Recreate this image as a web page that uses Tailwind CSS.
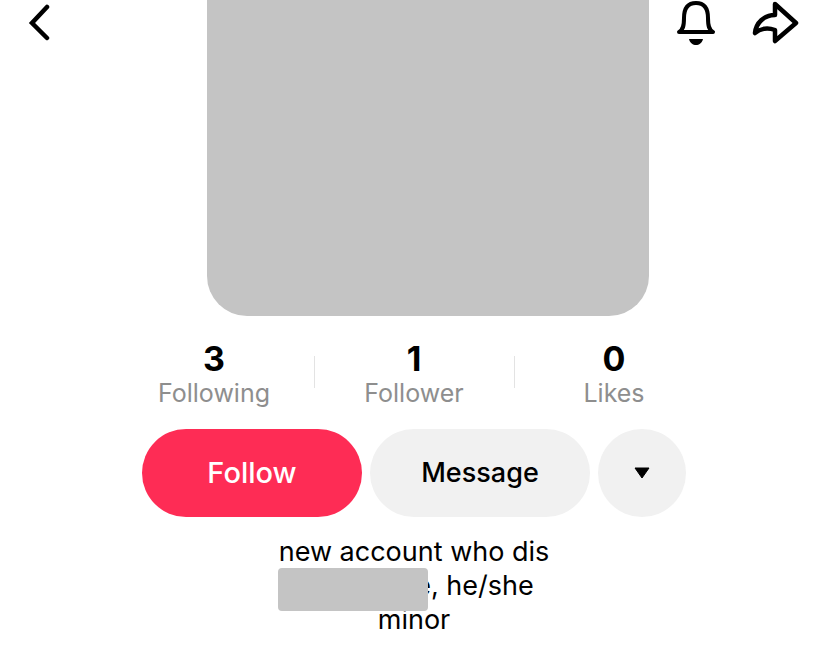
<!DOCTYPE html>
<html lang="en">
<head>
<meta charset="UTF-8" />
<title>Profile</title>
<script src="https://cdn.jsdelivr.net/npm/@tailwindcss/browser@4"></script>
</head>
<body class="bg-white text-black font-['Inter',sans-serif]">
<div class="relative w-[828px] h-[663px] overflow-hidden flex flex-col items-center">
  <!-- top icons -->
  <svg class="absolute left-[26px] top-[4px]" width="28" height="40" viewBox="0 0 28 40" fill="none" stroke="#000" stroke-width="4.5" stroke-linecap="round" stroke-linejoin="miter"><path d="M21 3 L6 19 L21 34"/></svg>
  <svg class="absolute left-[674px] top-0" width="44" height="48" viewBox="0 0 44 48" fill="none" stroke="#000" stroke-width="4" stroke-linecap="round" stroke-linejoin="round"><path d="M5 32 C9 30 10 26 10 18 C10 8 14 3 22 3 C30 3 34 8 34 18 C34 26 35 30 39 32 Z"/><path d="M15 39 H29 C28 43 25 45 22 45 C19 45 16 43 15 39 Z" fill="#000" stroke="none"/></svg>
  <svg class="absolute left-[751px] top-0" width="50" height="46" viewBox="0 0 50 46" fill="none" stroke="#000" stroke-width="4.5" stroke-linejoin="round"><path d="M24 4 L45 23 L24 41 V30 C16 27 9 29 4 33 C5 23 13 15 24 15 Z"/></svg>

  <!-- avatar -->
  <div class="self-start ml-[207px] w-[442px] h-[316px] bg-[#c4c4c4] rounded-b-[40px] shrink-0"></div>

  <!-- stats -->
  <div class="flex mt-[24px] w-[600px]">
    <div class="w-[200px] flex flex-col items-center">
      <span class="text-[34px] leading-[38px] font-bold">3</span>
      <span class="text-[25px] leading-[30px] text-[#8e8e8e]">Following</span>
    </div>
    <div class="w-[200px] flex flex-col items-center">
      <span class="text-[34px] leading-[38px] font-bold">1</span>
      <span class="text-[25px] leading-[30px] text-[#8e8e8e]">Follower</span>
    </div>
    <div class="w-[200px] flex flex-col items-center">
      <span class="text-[34px] leading-[38px] font-bold">0</span>
      <span class="text-[25px] leading-[30px] text-[#8e8e8e]">Likes</span>
    </div>
  </div>
  <div class="absolute left-[314px] top-[356px] w-px h-[32px] bg-[#e3e3e3]"></div>
  <div class="absolute left-[514px] top-[356px] w-px h-[32px] bg-[#e3e3e3]"></div>

  <!-- actions -->
  <div class="flex gap-2 mt-[21px]">
    <button class="w-[220px] h-[88px] rounded-[44px] bg-[#fe2c55] text-white text-[29px] font-medium">Follow</button>
    <button class="w-[220px] h-[88px] rounded-[44px] bg-[#f1f1f1] text-[27px] font-[550]">Message</button>
    <button class="w-[88px] h-[88px] rounded-full bg-[#f1f1f1] flex items-center justify-center">
      <svg width="18" height="14" viewBox="0 0 18 14" fill="#000" stroke="#000" stroke-width="1" stroke-linejoin="round"><path d="M2 2 H16 L9 12 Z"/></svg>
    </button>
  </div>

  <!-- bio -->
  <div class="mt-[18px] text-[27px] leading-[34px] text-center">
    <p>new account who dis</p>
    <p class="pl-[121px]">e, he/she</p>
    <p>minor</p>
  </div>
  <div class="absolute left-[278px] top-[568px] w-[150px] h-[43px] bg-[#c4c4c4] rounded-[4px]"></div>
</div>
</body>
</html>
